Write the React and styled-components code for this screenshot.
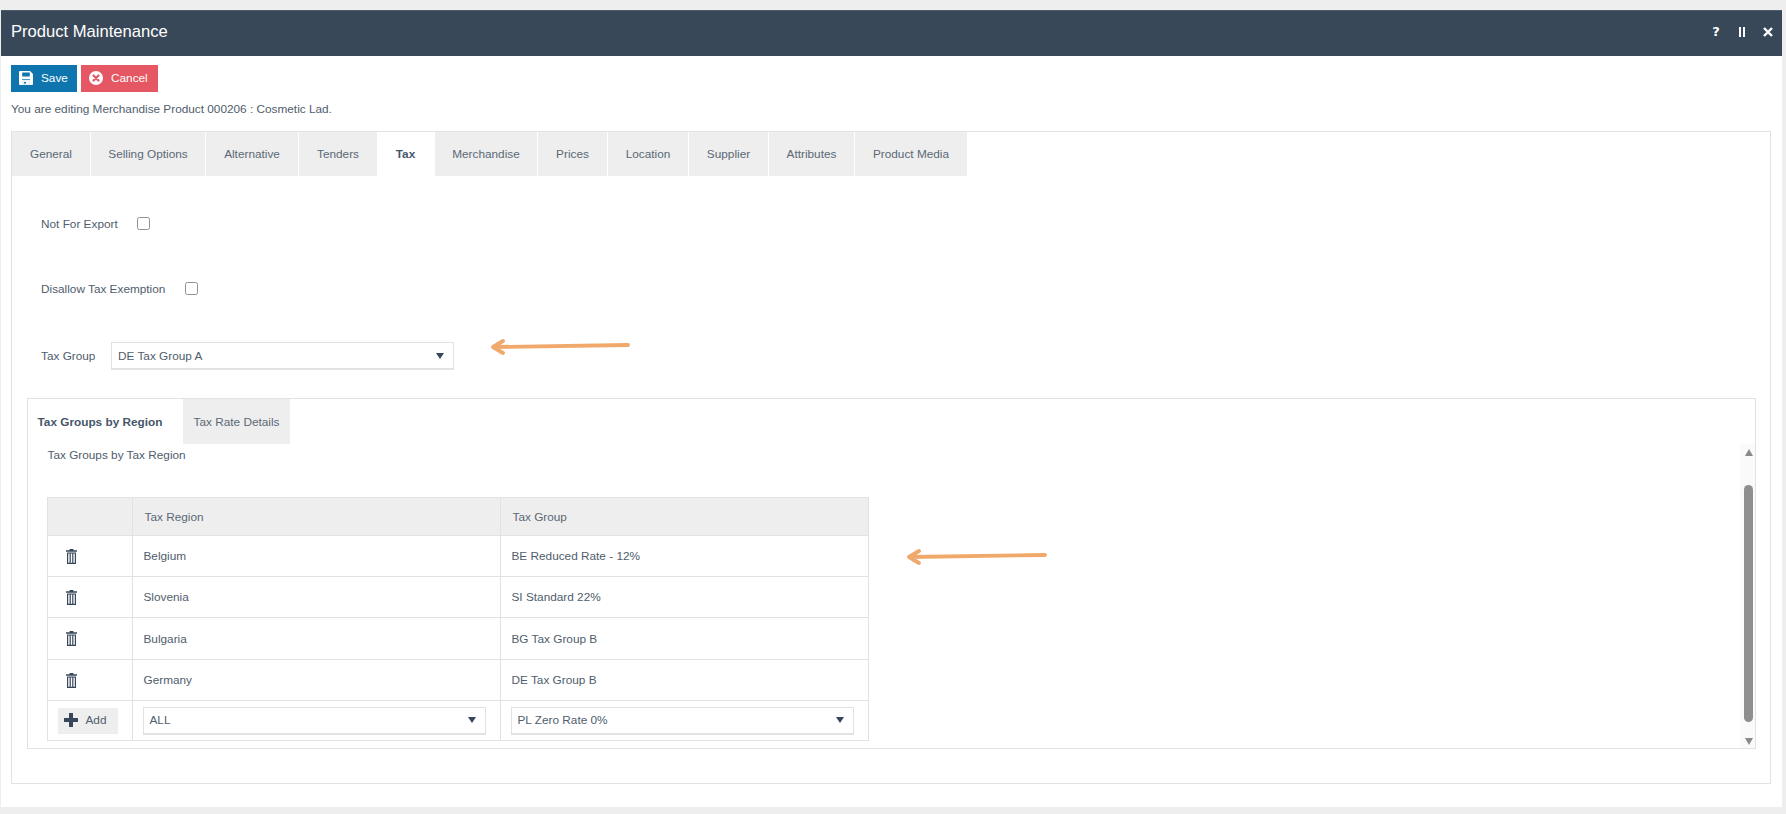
import React from "react";
import styled, { createGlobalStyle } from "styled-components";

const Global = createGlobalStyle`
  html, body { margin: 0; padding: 0; background: #eeeeee; }
  body { font-family: "Liberation Sans", Arial, sans-serif; font-size: 11.8px; color: #4f5d6c; overflow: hidden; }
`;
const Page = styled.div`
  width: 1786px; height: 814px; padding: 10px 0 0 1px; box-sizing: border-box;
`;
const Window = styled.div`
  width: 1781px; height: 797px; background: #fff; display: flex; flex-direction: column;
`;
const TitleBar = styled.div`
  height: 46px; flex: none; background: #384858; display: flex; align-items: center; justify-content: space-between;
  padding: 0 9px 4px 10px; color: #fff; box-sizing: border-box; border-top: 1px solid #4d5c6b;
`;
const Title = styled.div`font-size: 16.6px;`;
const WinIcons = styled.div`display: flex; align-items: center; gap: 16px; font-family: "DejaVu Sans", sans-serif; font-weight: 700; font-size: 13px;`;
const WinIcon = styled.span`display: flex; width: 10px; justify-content: center; align-items: center;`;
const Body = styled.div`flex: 1; padding: 9px 10px 0 10px; display: flex; flex-direction: column;`;
const Toolbar = styled.div`display: flex; gap: 4px; height: 27px;`;
const ActionButton = styled.button`
  border: 0; height: 27px; padding: 0 0 1px 8px; margin: 0; display: flex; align-items: center; gap: 8px; color: #fff; box-sizing: border-box;
  font: 11.8px "Liberation Sans", Arial, sans-serif; background: ${p => p.$bg}; width: ${p => p.$w}px;
`;
const Message = styled.div`height: 39px; line-height: 34px; color: #4f5d6c;`;
const Panel = styled.div`
  width: 1760px; height: 653px; box-sizing: border-box; border: 1px solid #e2e2e2;
`;
const Tabs = styled.div`display: flex; gap: ${p => p.$gap ?? 1}px; height: ${p => p.$h}px;`;
const Tab = styled.div`
  display: flex; align-items: center; justify-content: center; box-sizing: border-box; padding-right: ${p => p.$pr ?? 0}px;
  width: ${p => p.$w}px; margin-left: ${p => p.$ml ?? 0}px; background: ${p => (p.$active ? "#fff" : "#eeeeee")};
  font-weight: ${p => (p.$active ? 700 : 400)}; color: ${p => (p.$active ? "#46566a" : "#5a6875")};
`;
const FormArea = styled.div`padding: 0 0 0 15px;`;
const Field = styled.div`
  display: flex; align-items: center; box-sizing: border-box; padding-left: 14px; padding-top: ${p => p.$pt ?? 0}px; height: ${p => p.$h}px;
`;
const Label = styled.label`color: #4f5d6c; width: ${p => p.$w}px; flex: none;`;
const Check = styled.span`
  display: block; width: 13px; height: 13px; box-sizing: border-box; border: 1px solid #8f8f8f; border-radius: 2.5px; background: #fff;
`;
const Select = styled.div`
  width: ${p => p.$w}px; height: ${p => p.$h}px; flex: none; box-sizing: border-box; border: 1px solid #e2e2e2; border-bottom-width: 2px; display: flex; align-items: center;
  justify-content: space-between; padding: 0 9px 0 6px; color: #4f5d6c; background: #fff;
`;
const Caret = styled.span`
  width: 0; height: 0; border-left: 4.5px solid transparent; border-right: 4.5px solid transparent; border-top: 6px solid #37475a;
`;
const InnerPanel = styled.div`
  width: 1729px; height: 351px; box-sizing: border-box; border: 1px solid #e2e2e2; display: flex; flex-direction: column;
`;
const InnerBody = styled.div`flex: 1; display: flex; min-height: 0;`;
const Content = styled.div`flex: 1; padding-left: 18.5px;`;
const Caption = styled.div`height: 53px; line-height: 22px; padding-left: 1px; color: #4f5d6c;`;
const Table = styled.table`
  border-collapse: collapse; table-layout: fixed; width: 821px;
  th, td { border: 1px solid #e2e2e2; padding: 0; font-size: 11.8px; color: #4f5d6c; text-align: left; }
  th { background: #eeeeee; font-weight: 400; height: 37px; padding-left: 12px; color: #5a6875; }
  td { height: 40px; padding-left: 11px; }
  tr:nth-child(3) td { height: 41px; }
  tr:last-child td { height: 39px; }
`;
const IconCell = styled.td`&& { padding: 0 36px 0 0; text-align: center; } svg { display: inline-block; vertical-align: middle; }`;
const AddCell = styled.td`&& { padding: 0 0 0 10px; }`;
const SelectCell = styled.td`&& { padding: 0 0 0 10px; }`;
const AddButton = styled.button`
  border: 0; margin: 0; background: #eeeeee; width: 60px; height: 26px; display: flex; align-items: center; gap: 8px; padding: 0 0 2px 6px; box-sizing: border-box;
  font: 11.8px "Liberation Sans", Arial, sans-serif; color: #4f5d6c;
`;
const Scrollbar = styled.div`
  width: 15px; flex: none; background: #fafafa; display: flex; flex-direction: column; align-items: center; padding-top: 5px; box-sizing: border-box;
`;
const ArrowUp = styled.span`
  width: 0; height: 0; border-left: 4.5px solid transparent; border-right: 4.5px solid transparent; border-bottom: 7px solid #8a8a8a; margin-left: 2px;
`;
const ArrowDown = styled.span`
  width: 0; height: 0; border-left: 4.5px solid transparent; border-right: 4.5px solid transparent; border-top: 7px solid #8a8a8a; margin: 16px 0 0 2px;
`;
const Thumb = styled.div`width: 9px; height: 237px; margin: 29px 0 0 2px; background: #8f8f8f; border-radius: 5px;`;
const Annotation = styled.svg`position: absolute; left: 0; top: 0; overflow: visible; pointer-events: none;`;

const Arrow = ({ x1, y1, x2, y2 }) => (
  <Annotation width="1" height="1">
    <path d={`M${x2} ${y2} L${x1} ${y1} M${x1 + 10} ${y1 - 6} L${x1} ${y1} L${x1 + 10} ${y1 + 6}`} fill="none" stroke="#f0a96b" strokeWidth="3.8" strokeLinecap="round" strokeLinejoin="round" />
  </Annotation>
);

const Floppy = () => (
  <svg width="14" height="14" viewBox="0 0 14 14">
    <path fill="#fff" fillRule="evenodd" d="M1 0h10l3 3v10a1 1 0 0 1-1 1H1a1 1 0 0 1-1-1V1a1 1 0 0 1 1-1zM3.2 1.4v4h7.6v-4zM3 8.2V14h8V8.2zM7.5 10h2v2.4h-2z" />
    <path fill="#fff" d="M3 9h8v5H3z" opacity="0.9" />
    <path fill="#0f75ae" d="M5 11h2v1.6H5z" />
  </svg>
);
const CancelIcon = () => (
  <svg width="14" height="14" viewBox="0 0 14 14">
    <circle cx="7" cy="7" r="7" fill="#fff" />
    <path d="M4.5 4.5l5 5M9.5 4.5l-5 5" stroke="#e55762" strokeWidth="2.2" strokeLinecap="round" />
  </svg>
);
const Trash = () => (
  <svg width="11" height="15" viewBox="0 0 11 15">
    <path fill="#37475a" fillRule="evenodd" d="M3.6 0h3.8v1.3H11v1.5H0V1.3h3.6zM1 3.4h9V15H1zM2.2 4.6V13.8h1.4V4.6zM4.8 4.6V13.8h1.4V4.6zM7.4 4.6V13.8h1.4V4.6z" />
  </svg>
);
const Plus = () => (
  <svg width="14" height="14" viewBox="0 0 14 14">
    <path fill="#37475a" d="M5 0h4v5h5v4H9v5H5V9H0V5h5z" />
  </svg>
);

const tabs = [
  ["General", 78], ["Selling Options", 114], ["Alternative", 92], ["Tenders", 78], ["Tax", 57, true, -1],
  ["Merchandise", 102], ["Prices", 69], ["Location", 80], ["Supplier", 79], ["Attributes", 85], ["Product Media", 112],
];
const rows = [["Belgium", "BE Reduced Rate - 12%"], ["Slovenia", "SI Standard 22%"], ["Bulgaria", "BG Tax Group B"], ["Germany", "DE Tax Group B"]];

export default function App() {
  return (
    <Page>
      <Global />
      <Window>
        <TitleBar>
          <Title>Product Maintenance</Title>
          <WinIcons>
            <WinIcon>?</WinIcon>
            <WinIcon>
              <svg width="8" height="10" viewBox="0 0 8 10"><path fill="#fff" d="M1 0h2v10H1zM5 0h2v10H5z" /></svg>
            </WinIcon>
            <WinIcon>
              <svg width="10" height="10" viewBox="0 0 10 10"><path stroke="#fff" strokeWidth="2.4" d="M1 1l8 8M9 1l-8 8" /></svg>
            </WinIcon>
          </WinIcons>
        </TitleBar>
        <Body>
          <Toolbar>
            <ActionButton $bg="#0f75ae" $w={66}><Floppy />Save</ActionButton>
            <ActionButton $bg="#e55762" $w={77}><CancelIcon />Cancel</ActionButton>
          </Toolbar>
          <Message>You are editing Merchandise Product 000206 : Cosmetic Lad.</Message>
          <Panel>
            <Tabs $h={44}>
              {tabs.map(([t, w, a, ml]) => <Tab key={t} $w={w} $active={a} $ml={ml}>{t}</Tab>)}
            </Tabs>
            <FormArea>
              <Field $h={95}>
                <Label $w={96}>Not For Export</Label>
                <Check />
              </Field>
              <Field $h={35}>
                <Label $w={144}>Disallow Tax Exemption</Label>
                <Check />
              </Field>
              <Field $h={92} $pt={8}>
                <Label $w={70}>Tax Group</Label>
                <Select $w={343} $h={28}>DE Tax Group A<Caret /></Select>
              </Field>
              <InnerPanel>
                <Tabs $h={45} $gap={0}>
                  <Tab $w={155} $active $pr={11}>Tax Groups by Region</Tab>
                  <Tab $w={107}>Tax Rate Details</Tab>
                </Tabs>
                <InnerBody>
                  <Content>
                    <Caption>Tax Groups by Tax Region</Caption>
                    <Table>
                      <colgroup><col width="85" /><col width="368" /><col width="368" /></colgroup>
                      <thead>
                        <tr><th /><th>Tax Region</th><th>Tax Group</th></tr>
                      </thead>
                      <tbody>
                        {rows.map(([r, g]) => (
                          <tr key={r}>
                            <IconCell><Trash /></IconCell>
                            <td>{r}</td>
                            <td>{g}</td>
                          </tr>
                        ))}
                        <tr>
                          <AddCell><AddButton><Plus />Add</AddButton></AddCell>
                          <SelectCell><Select $w={343} $h={28}>ALL<Caret /></Select></SelectCell>
                          <SelectCell><Select $w={343} $h={28}>PL Zero Rate 0%<Caret /></Select></SelectCell>
                        </tr>
                      </tbody>
                    </Table>
                  </Content>
                  <Scrollbar>
                    <ArrowUp />
                    <Thumb />
                    <ArrowDown />
                  </Scrollbar>
                </InnerBody>
              </InnerPanel>
            </FormArea>
          </Panel>
        </Body>
      </Window>
      <Arrow x1={493} y1={347} x2={628} y2={345} />
      <Arrow x1={909} y1={557} x2={1045} y2={555} />
    </Page>
  );
}
